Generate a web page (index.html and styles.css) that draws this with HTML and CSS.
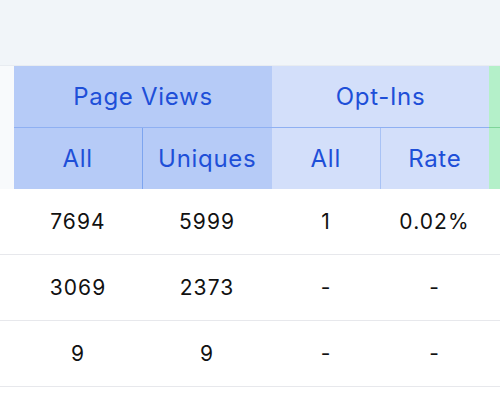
FILE: index.html
```html
<!DOCTYPE html>
<html>
<head>
<meta charset="utf-8">
<link rel="stylesheet" href="styles.css">
</head>
<body>
<div class="top"></div>
<div class="wrap">
<table class="stats">
  <colgroup>
    <col class="c-lead"><col class="c-pv1"><col class="c-pv2"><col class="c-oi1"><col class="c-oi2"><col class="c-next">
  </colgroup>
  <thead>
    <tr class="h1">
      <th class="lead"></th>
      <th class="pv" colspan="2">Page Views</th>
      <th class="oi" colspan="2">Opt-Ins</th>
      <th class="gr"></th>
    </tr>
    <tr class="h2">
      <th class="lead"></th>
      <th class="pv sep">All</th>
      <th class="pv">Uniques</th>
      <th class="oi sep2">All</th>
      <th class="oi">Rate</th>
      <th class="gr"></th>
    </tr>
  </thead>
  <tbody>
    <tr><td></td><td>7694</td><td>5999</td><td>1</td><td>0.02%</td><td></td></tr>
    <tr><td></td><td>3069</td><td>2373</td><td>-</td><td>-</td><td></td></tr>
    <tr><td></td><td>9</td><td>9</td><td>-</td><td>-</td><td></td></tr>
  </tbody>
</table>
</div>
</body>
</html>
```
FILE: styles.css
```css
html, body {
  margin: 0;
  padding: 0;
  background: #ffffff;
  font-family: Inter, "Noto Sans", sans-serif;
  overflow: hidden;
}
.top {
  height: 65px;
  background: #f1f5f9;
  border-bottom: 1px solid #e8ecf1;
}
.wrap {
  width: 500px;
  overflow: hidden;
}
.stats {
  border-collapse: collapse;
  table-layout: fixed;
  width: 600px;
}
.c-lead { width: 14px; }
.c-pv1 { width: 128px; }
.c-pv2 { width: 130px; }
.c-oi1 { width: 108px; }
.c-oi2 { width: 109px; }
.c-next { width: 111px; }
th {
  font-weight: 400;
  font-size: 24px;
  color: #1e4fd8;
  letter-spacing: 0.7px;
  padding: 0;
  text-align: center;
}
.h1 th { height: 61px; }
.h2 th { height: 61px; }
.h1 th.pv, .h1 th.oi { border-bottom: 1px solid #8fb0f2; }
.h1 th.gr { border-bottom: 1px solid #7fd49a; }
th.lead { background: #f8fafc; }
th.pv { background: #b6cbf7; }
th.oi { background: #d3dffa; }
th.gr { background: #b4f0c9; }
th.sep { border-right: 1px solid #7da5ef; }
th.sep2 { border-right: 1px solid #a8c2f5; }
td {
  height: 65px;
  padding: 0;
  text-align: center;
  font-size: 21px;
  letter-spacing: 1.1px;
  color: #111111;
  border-bottom: 1px solid #e7e8ec;
}
```
